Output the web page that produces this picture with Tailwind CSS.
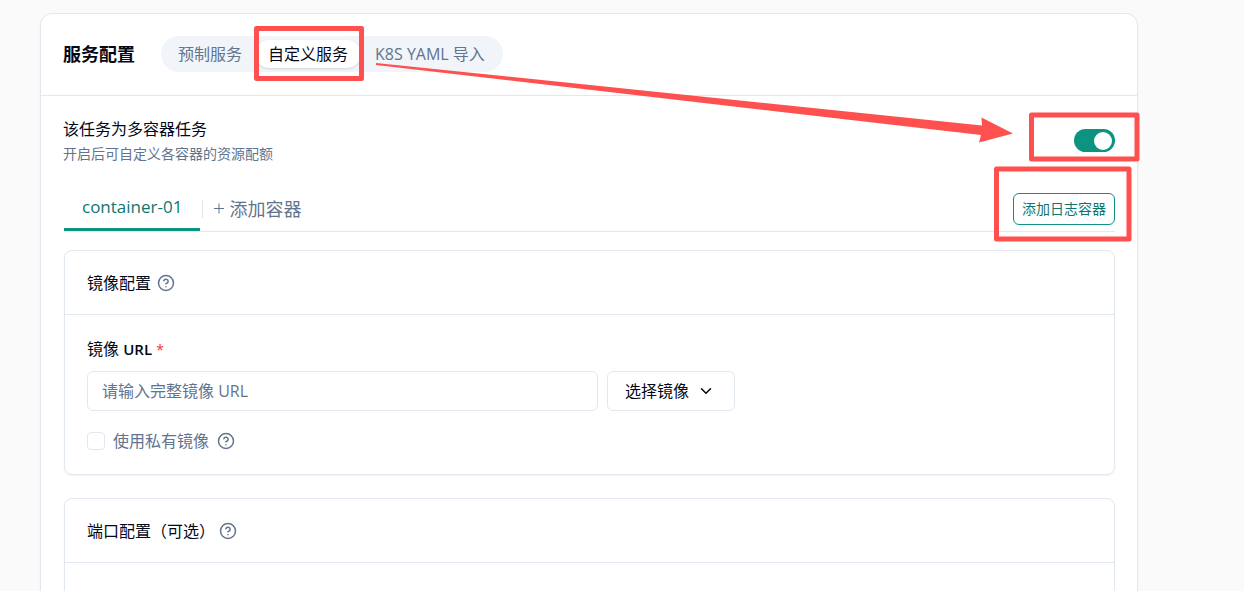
<!DOCTYPE html>
<html lang="zh-CN">
  <head>
    <meta charset="UTF-8" />
    <meta name="viewport" content="width=device-width, initial-scale=1.0" />
    <title>服务配置</title>
    <script src="https://cdn.jsdelivr.net/npm/@tailwindcss/browser@4"></script>
  </head>
  <body
    class="bg-[#fafafa] text-[#020817] font-['Open_Sans','Noto_Sans_CJK_SC',sans-serif]"
  >
    <main class="relative h-screen overflow-hidden pt-[13px] pl-10 pr-[106px]">
      <section class="rounded-xl border border-slate-200 bg-white shadow-xs">
        <!-- Header -->
        <header
          class="flex h-[82px] items-center gap-[26px] border-b border-slate-200 px-[22px] pb-0.5"
        >
          <h1 class="text-lg font-bold">服务配置</h1>
          <div
            class="flex h-9 items-center rounded-full bg-slate-100 p-1 text-base text-slate-500"
          >
            <button type="button" class="h-7 rounded-full px-[13px] leading-7">
              预制服务
            </button>
            <button
              type="button"
              class="h-7 rounded-full bg-white px-[13px] leading-7 text-[#020817] shadow-sm"
            >
              自定义服务
            </button>
            <button
              type="button"
              class="h-7 rounded-full px-3.5 leading-7"
            >
              K8S YAML 导入
            </button>
          </div>
        </header>

        <div class="px-[22px] pt-[21px] pb-6">
          <!-- Multi-container switch -->
          <div class="flex items-center justify-between">
            <div>
              <label for="multi-container" class="block text-base leading-6"
                >该任务为多容器任务</label
              >
              <p class="mt-[3px] text-sm leading-5 text-slate-500">
                开启后可自定义各容器的资源配额
              </p>
            </div>
            <input
              type="checkbox"
              role="switch"
              id="multi-container"
              checked
              class="flex h-[23px] w-[41px] appearance-none items-center rounded-full bg-slate-200 p-[3px] before:size-[18px] before:rounded-full before:bg-white checked:justify-end checked:bg-[#0d9480]"
            />
          </div>

          <!-- Container tabs -->
          <div
            class="mt-[23px] ml-px flex items-center border-b border-slate-200 text-lg"
          >
            <button
              type="button"
              class="h-11 border-b-3 border-[#0d9480] px-[18px] text-[17px] text-[#0f766e]"
            >
              container-01
            </button>
            <span class="ml-0.5 h-[18px] w-px bg-slate-200"></span>
            <button
              type="button"
              class="ml-2.5 flex h-11 items-center gap-1 text-slate-500"
            >
              <svg
                class="size-3"
                viewBox="0 0 12 12"
                fill="none"
                stroke="currentColor"
              >
                <path d="M1 5.5h10M6 0.5v10" />
              </svg>
              添加容器
            </button>
            <button
              type="button"
              class="ml-auto h-8 rounded-md border border-[#0d9480] bg-white px-2 text-sm text-[#0f766e]"
            >
              添加日志容器
            </button>
          </div>

          <!-- Image config -->
          <section
            class="mt-[18px] ml-px rounded-lg border border-slate-200 bg-white shadow-xs"
          >
            <div
              class="flex h-16 items-center gap-1.5 border-b border-slate-200 px-[22px]"
            >
              <h2 class="text-base">镜像配置</h2>
              <svg
                class="size-[18px] text-slate-500"
                viewBox="0 0 24 24"
                fill="none"
                stroke="currentColor"
                stroke-width="2"
                stroke-linecap="round"
                stroke-linejoin="round"
              >
                <circle cx="12" cy="12" r="10" />
                <path d="M9.09 9a3 3 0 0 1 5.83 1c0 2-3 3-3 3" />
                <path d="M12 17h.01" />
              </svg>
            </div>
            <div class="px-[22px] pt-[22px] pb-[21px]">
              <label for="image-url" class="block text-base leading-6"
                >镜像
                <span class="text-[15px] font-semibold">URL</span>
                <span class="text-sm text-red-500">*</span></label
              >
              <div class="mt-2.5 flex gap-[9px]">
                <input
                  type="text"
                  id="image-url"
                  placeholder="请输入完整镜像 URL"
                  class="h-10 w-full max-w-[511px] rounded-md border border-slate-200 bg-white px-3.5 text-base placeholder:text-slate-500"
                />
                <button
                  type="button"
                  class="flex h-10 w-32 shrink-0 items-center gap-2 rounded-md border border-slate-200 bg-white px-[17px] text-base"
                >
                  选择镜像
                  <svg
                    class="size-[18px]"
                    viewBox="0 0 24 24"
                    fill="none"
                    stroke="currentColor"
                    stroke-width="2"
                    stroke-linecap="round"
                    stroke-linejoin="round"
                  >
                    <path d="m6 9 6 6 6-6" />
                  </svg>
                </button>
              </div>
              <div class="mt-[18px] flex h-6 items-center gap-2">
                <input
                  type="checkbox"
                  id="private-image"
                  class="size-[18px] appearance-none rounded-sm border border-slate-200 bg-white checked:bg-[#0d9480]"
                />
                <label for="private-image" class="text-base text-slate-500"
                  >使用私有镜像</label
                >
                <svg
                  class="size-[18px] text-slate-500"
                  viewBox="0 0 24 24"
                  fill="none"
                  stroke="currentColor"
                  stroke-width="2"
                  stroke-linecap="round"
                  stroke-linejoin="round"
                >
                  <circle cx="12" cy="12" r="10" />
                  <path d="M9.09 9a3 3 0 0 1 5.83 1c0 2-3 3-3 3" />
                  <path d="M12 17h.01" />
                </svg>
              </div>
            </div>
          </section>

          <!-- Port config -->
          <section
            class="mt-[23px] ml-px rounded-lg border border-slate-200 bg-white shadow-xs"
          >
            <div
              class="flex h-16 items-center gap-1 border-b border-slate-200 px-[22px]"
            >
              <h2 class="text-base">端口配置（可选）</h2>
              <svg
                class="size-[18px] text-slate-500"
                viewBox="0 0 24 24"
                fill="none"
                stroke="currentColor"
                stroke-width="2"
                stroke-linecap="round"
                stroke-linejoin="round"
              >
                <circle cx="12" cy="12" r="10" />
                <path d="M9.09 9a3 3 0 0 1 5.83 1c0 2-3 3-3 3" />
                <path d="M12 17h.01" />
              </svg>
            </div>
            <div class="h-40"></div>
          </section>
        </div>
      </section>

      <!-- Guide marks over the form -->
      <svg
        class="pointer-events-none absolute top-0 left-0 h-[260px] w-[1244px]"
        viewBox="0 0 1244 260"
        fill="none"
        stroke="#ff5050"
        stroke-width="5"
        stroke-linejoin="round"
      >
        <rect x="256.5" y="28.5" width="105" height="50" />
        <rect x="1031.5" y="115" width="105.5" height="44" />
        <rect x="996.5" y="169" width="132.5" height="70" />
        <path
          d="M376 63 982 125.5 981.5 117.5 1013 133.5 979 142.5 981 135 376 65z"
          fill="#ff5050"
          stroke="none"
        />
      </svg>
    </main>
  </body>
</html>
